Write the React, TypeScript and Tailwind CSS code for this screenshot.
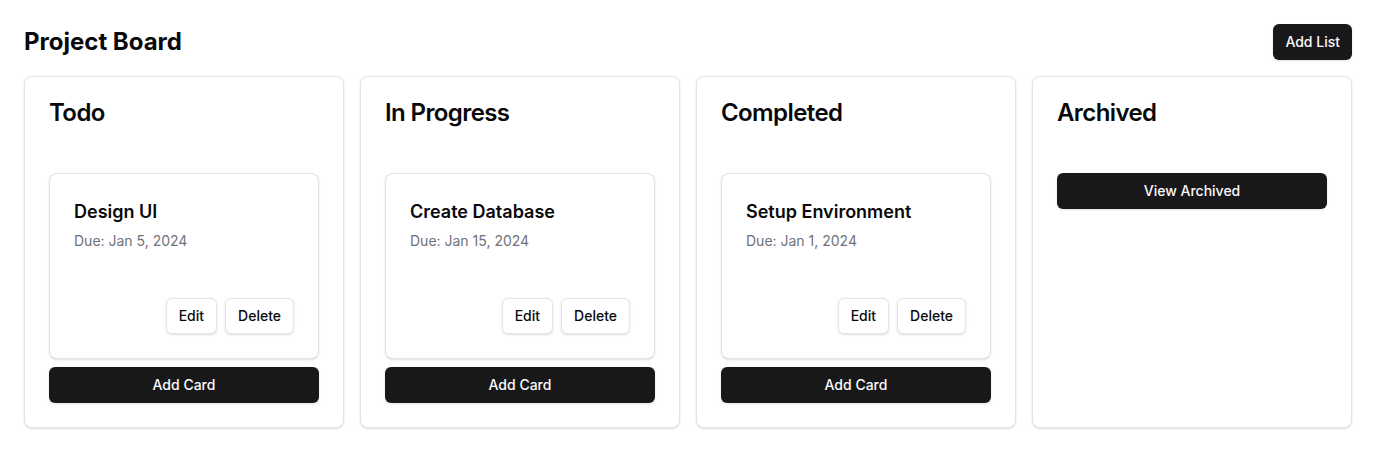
import React from 'react';

interface Task {
  id: number;
  title: string;
  due: string;
}

interface List {
  id: string;
  title: string;
  tasks: Task[];
  archived?: boolean;
}

const lists: List[] = [
  { id: 'todo', title: 'Todo', tasks: [{ id: 1, title: 'Design UI', due: 'Jan 5, 2024' }] },
  { id: 'progress', title: 'In Progress', tasks: [{ id: 2, title: 'Create Database', due: 'Jan 15, 2024' }] },
  { id: 'done', title: 'Completed', tasks: [{ id: 3, title: 'Setup Environment', due: 'Jan 1, 2024' }] },
  { id: 'archived', title: 'Archived', tasks: [], archived: true },
];

const darkBtn =
  'h-9 rounded-md bg-[#18181b] px-3 text-sm font-medium text-[#fafafa] shadow-sm hover:bg-[#27272a]';
const outlineBtn =
  'h-9 rounded-md border border-[#e4e4e7] bg-white px-3 text-sm font-medium text-[#09090b] shadow-sm hover:bg-[#f4f4f5]';

const TaskCard: React.FC<{ task: Task }> = ({ task }) => (
  <div className="rounded-lg border border-[#e4e4e7] bg-white p-6 shadow-sm">
    <h3 className="text-lg font-semibold leading-7">{task.title}</h3>
    <p className="mt-[5px] text-sm leading-5 text-[#71717a]">Due: {task.due}</p>
    {/* actions */}
    <div className="mt-[47px] flex justify-end gap-2">
      <button className={outlineBtn}>Edit</button>
      <button className={outlineBtn}>Delete</button>
    </div>
  </div>
);

const ListColumn: React.FC<{ list: List }> = ({ list }) => (
  <div className="rounded-lg border border-[#e4e4e7] bg-white p-6 shadow-sm">
    <h2 className="text-2xl font-semibold leading-6 tracking-tight">{list.title}</h2>
    <div className="mt-[48px] flex flex-col gap-2">
      {list.archived ? (
        <button className={`${darkBtn} w-full`}>View Archived</button>
      ) : (
        <>
          {list.tasks.map((t) => (
            <TaskCard key={t.id} task={t} />
          ))}
          <button className={`${darkBtn} w-full`}>Add Card</button>
        </>
      )}
    </div>
  </div>
);

export default function App() {
  return (
    <div
      className="min-h-screen bg-white p-6 text-[#09090b]"
      style={{ fontFamily: 'Inter, "Noto Sans", sans-serif' }}
    >
      <div className="mb-4 flex items-center justify-between">
        <h1 className="text-2xl font-bold">Project Board</h1>
        <button className={darkBtn}>Add List</button>
      </div>
      <div className="grid grid-cols-4 gap-4">
        {lists.map((l) => (
          <ListColumn key={l.id} list={l} />
        ))}
      </div>
    </div>
  );
}
